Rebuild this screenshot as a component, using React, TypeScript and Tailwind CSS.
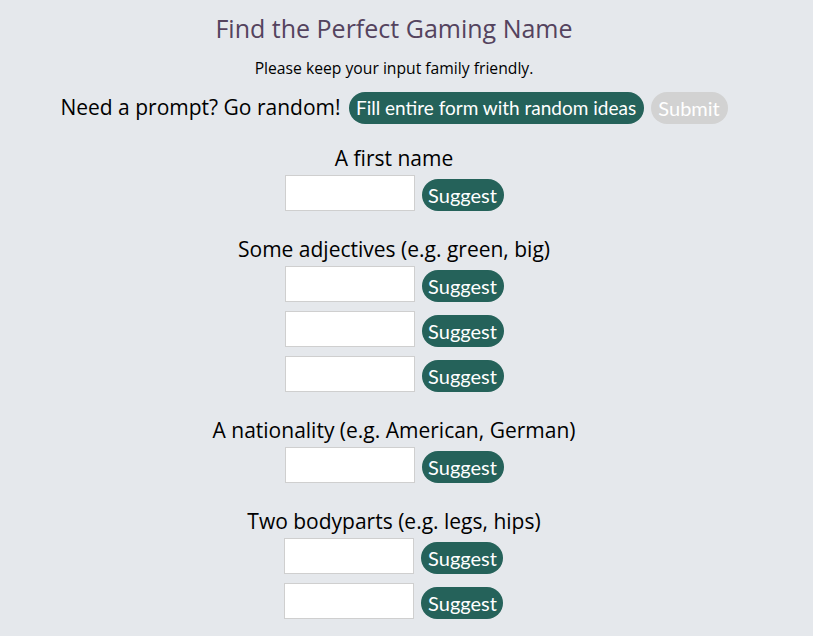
import React from "react";

const sections: { label: string; count: number }[] = [
  { label: "A first name", count: 1 },
  { label: "Some adjectives (e.g. green, big)", count: 3 },
  { label: "A nationality (e.g. American, German)", count: 1 },
  { label: "Two bodyparts (e.g. legs, hips)", count: 2 },
];

function FieldRow() {
  return (
    <div className="flex items-end gap-[7px]">
      <input
        type="text"
        className="h-9 w-[130px] border border-[#cfcfcf] bg-white px-2 text-base outline-none"
      />
      <button
        type="button"
        className="h-8 w-[82px] rounded-full bg-[#25625a] text-[20px] leading-none text-white font-['Lato',sans-serif]"
      >
        Suggest
      </button>
    </div>
  );
}

export default function App() {
  return (
    <main className="min-h-screen bg-[#e5e8ec] text-black font-['Open_Sans',sans-serif]">
      <div className="flex w-[788px] flex-col items-center">
        <h1 className="mt-3 h-8 text-[25px] leading-8 text-[#54435e]">
          Find the Perfect Gaming Name
        </h1>
        <p className="mt-[14px] h-5 text-[15.7px] leading-5">
          Please keep your input family friendly.
        </p>

        <div className="mt-[14px] flex h-8 items-center">
          <span className="mr-2 text-[21px]">Need a prompt? Go random!</span>
          <button
            type="button"
            className="h-8 w-[295px] rounded-full bg-[#25625a] text-[19px] text-white font-['Lato',sans-serif]"
          >
            Fill entire form with random ideas
          </button>
          <button
            type="button"
            className="ml-[7px] h-8 w-[77px] rounded-full bg-[#d2d2d2] text-[20px] text-white font-['Lato',sans-serif]"
          >
            Submit
          </button>
        </div>

        <form className="mt-[22px] flex flex-col items-center gap-[26px]">
          {sections.map((s) => (
            <div key={s.label} className="flex flex-col items-center">
              <label className="h-6 text-[21px] leading-6">{s.label}</label>
              <div className="mt-[5px] flex flex-col gap-[9px]">
                {Array.from({ length: s.count }).map((_, i) => (
                  <FieldRow key={i} />
                ))}
              </div>
            </div>
          ))}
        </form>
      </div>
    </main>
  );
}
